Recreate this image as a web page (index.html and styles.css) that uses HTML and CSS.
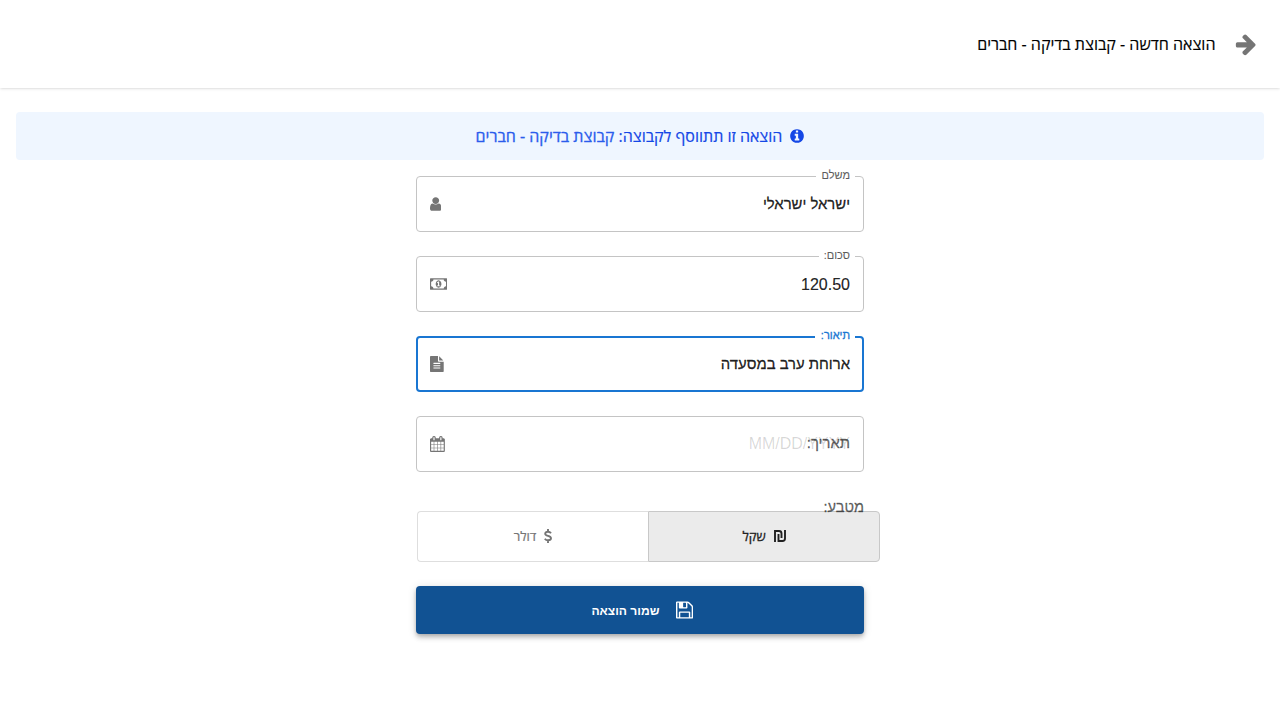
FILE: index.html
```html
<!DOCTYPE html>
<html lang="he" dir="rtl">
<head>
<meta charset="utf-8">
<title>הוצאה חדשה</title>
<link rel="stylesheet" href="styles.css">
</head>
<body>
<header class="topbar">
  <svg class="back" viewBox="64 0 1536 1792"><path d="M1600 960q0 54-37 91l-651 651q-39 37-91 37-51 0-90-37l-75-75q-38-38-38-91t38-91l293-293h-704q-52 0-84.500-37.500t-32.500-90.500v-128q0-53 32.500-90.500t84.500-37.500h704l-293-294q-38-36-38-90t38-90l75-75q38-38 90-38 53 0 91 38l651 651q37 35 37 90z"/></svg>
  <h1 class="title">הוצאה חדשה - קבוצת בדיקה - חברים</h1>
</header>
<div class="notice">
  <svg class="info" viewBox="128 0 1536 1792"><path d="M1152 1376v-160q0-14-9-23t-23-9h-96v-512q0-14-9-23t-23-9h-320q-14 0-23 9t-9 23v160q0 14 9 23t23 9h96v320h-96q-14 0-23 9t-9 23v160q0 14 9 23t23 9h448q14 0 23-9t9-23zm-128-896v-160q0-14-9-23t-23-9h-192q-14 0-23 9t-9 23v160q0 14 9 23t23 9h192q14 0 23-9t9-23zm640 416q0 209-103 385.500t-279.500 279.500-385.500 103-385.500-103-279.500-279.500-103-385.500 103-385.500 279.500-279.500 385.500-103 385.500 103 279.500 279.500 103 385.500z"/></svg>
  <p class="notice-text">הוצאה זו תתווסף לקבוצה: <span class="group">קבוצת בדיקה - חברים</span></p>
</div>
<main class="form">
  <fieldset class="field">
    <legend class="label">משלם</legend>
    <span class="value">ישראל ישראלי</span>
    <svg class="icon user" viewBox="256 0 1280 1792"><path d="M1536 1399q0 109-62.500 187t-150.500 78h-854q-88 0-150.500-78t-62.500-187q0-85 8.500-160.500t31.500-152 58.500-131 94-89 134.500-34.500q131 128 313 128t313-128q76 0 134.500 34.500t94 89 58.500 131 31.500 152 8.500 160.500zm-256-887q0 159-112.500 271.500t-271.500 112.500-271.500-112.500-112.500-271.500 112.500-271.500 271.500-112.500 271.500 112.500 112.500 271.500z"/></svg>
  </fieldset>
  <fieldset class="field">
    <legend class="label">סכום:</legend>
    <span class="value number">120.50</span>
    <svg class="icon money" viewBox="0 0 1920 1792"><path d="M768 1152h384v-96h-128v-448h-114l-148 137 77 80q42-37 55-57h2v288h-128v96zm512-256q0 70-21 142t-59.500 134-101.500 101-138 39-138-39-101.500-101-59.500-134-21-142 21-142 59.500-134 101.500-101 138-39 138 39 101.500 101 59.500 134 21 142zm512 256v-512q-106 0-181-75t-75-181h-1152q0 106-75 181t-181 75v512q106 0 181 75t75 181h1152q0-106 75-181t181-75zm128-832v1152q0 26-19 45t-45 19h-1792q-26 0-45-19t-19-45v-1152q0-26 19-45t45-19h1792q26 0 45 19t19 45z"/></svg>
  </fieldset>
  <fieldset class="field focused">
    <legend class="label">תיאור:</legend>
    <span class="value">ארוחת ערב במסעדה</span>
    <svg class="icon file" viewBox="128 0 1536 1792"><path d="M1596 476q14 14 28 36h-472v-472q22 14 36 28zm-476 164h544v1056q0 40-28 68t-68 28h-1344q-40 0-68-28t-28-68v-1600q0-40 28-68t68-28h800v544q0 40 28 68t68 28zm160 736v-64q0-14-9-23t-23-9h-704q-14 0-23 9t-9 23v64q0 14 9 23t23 9h704q14 0 23-9t9-23zm0-256v-64q0-14-9-23t-23-9h-704q-14 0-23 9t-9 23v64q0 14 9 23t23 9h704q14 0 23-9t9-23zm0-256v-64q0-14-9-23t-23-9h-704q-14 0-23 9t-9 23v64q0 14 9 23t23 9h704q14 0 23-9t9-23z"/></svg>
  </fieldset>
  <div class="field date">
    <span class="stack"><span class="placeholder">MM/DD/YYYY</span><span class="inner-label">תאריך:</span></span>
    <svg class="icon calendar" viewBox="64 0 1664 1792"><path d="M192 1664h288v-288h-288v288zm352 0h320v-288h-320v288zm-352-352h288v-320h-288v320zm352 0h320v-320h-320v320zm-352-384h288v-288h-288v288zm736 736h320v-288h-320v288zm-384-736h320v-288h-320v288zm768 736h288v-288h-288v288zm-384-352h320v-320h-320v320zm-352-864v-288q0-13-9.500-22.500t-22.500-9.500h-64q-13 0-22.500 9.500t-9.500 22.500v288q0 13 9.500 22.500t22.500 9.500h64q13 0 22.500-9.500t9.500-22.500zm736 864h288v-320h-288v320zm-384-384h320v-288h-320v288zm384 0h288v-288h-288v288zm32-480v-288q0-13-9.500-22.500t-22.500-9.500h-64q-13 0-22.500 9.500t-9.500 22.500v288q0 13 9.500 22.500t22.500 9.500h64q13 0 22.500-9.500t9.500-22.500zm384-64v1280q0 52-38 90t-90 38h-1408q-52 0-90-38t-38-90v-1280q0-52 38-90t90-38h128v-96q0-66 47-113t113-47h64q66 0 113 47t47 113v96h384v-96q0-66 47-113t113-47h64q66 0 113 47t47 113v96h128q52 0 90 38t38 90z"/></svg>
  </div>
  <div class="currency-label">מטבע:</div>
  <div class="toggle">
    <button class="option selected">
      <svg class="ils" viewBox="0 0 12 12"><path d="M1 12V1h4q2.500 0 2.500 2.500V8M4.500 4v7h4q2.500 0 2.500-2.500V0"/></svg>
      שקל
    </button>
    <button class="option">
      <svg class="usd" viewBox="0 0 8 14"><path d="M7 4.200Q6 2.700 4 2.700 1.200 2.700 1.200 4.700C1.200 7.500 7 6.300 7 9.300Q7 11.300 4 11.300 2 11.300.8 9.700M4 0v2.700M4 11.300V14"/></svg>
      דולר
    </button>
  </div>
  <button class="save">
    <svg class="floppy" viewBox="128 0 1536 1792"><path d="M512 1536h768v-384h-768v384zm896 0h128v-896q0-14-10-38.500t-20-34.500l-281-281q-10-10-34-20t-39-10v416q0 40-28 68t-68 28h-576q-40 0-68-28t-28-68v-416h-128v1280h128v-416q0-40 28-68t68-28h832q40 0 68 28t28 68v416zm-384-928v-320q0-13-9.500-22.500t-22.500-9.500h-192q-13 0-22.500 9.500t-9.500 22.500v320q0 13 9.500 22.500t22.500 9.500h192q13 0 22.500-9.500t9.500-22.500zm640 32v928q0 40-28 68t-68 28h-1344q-40 0-68-28t-28-68v-1344q0-40 28-68t68-28h928q40 0 88 20t76 48l280 280q28 28 48 76t20 88z"/></svg>
    <span>שמור הוצאה</span>
  </button>
</main>
</body>
</html>
```
FILE: styles.css
```css
* { box-sizing: border-box; }
body { margin: 0; min-height: 100vh; background: #fff; font-family: "Liberation Sans", Arial, sans-serif; font-size: 16px; color: rgba(0,0,0,.87); }
svg { fill: currentColor; flex: none; }
.topbar { display: flex; align-items: center; gap: 20px; height: 88px; padding: 0 24px; background: #fff; box-shadow: 0 1px 3px rgba(0,0,0,.1), 0 1px 2px -1px rgba(0,0,0,.1); color: #000; }
.back { width: 20.570px; height: 24px; color: #757575; }
.title { margin: 0; font: 400 16px/24px "Open Sans", sans-serif; -webkit-text-stroke: .15px; }
.notice { display: flex; align-items: center; justify-content: center; gap: 8px; height: 48px; margin: 24px 16px 16px; border-radius: 4px; background: #eff6ff; color: #1447e6; }
.info { width: 14px; height: 16px; }
.notice-text { margin: 0; font: 400 16px/24px "Open Sans", sans-serif; -webkit-text-stroke: .2px; }
.group { color: #2b5cec; -webkit-text-stroke: .3px; }
.form { width: 448px; margin: 0 auto; }
.field { display: flex; align-items: center; justify-content: space-between; min-width: 0; height: 61px; margin: -5px 0 24px; padding: 0 13px 5px; border: 1px solid #c4c4c4; border-radius: 4px; }
.label { height: 11px; padding: 0 5px; margin-right: -5px; font-size: 11px; line-height: 9px; color: rgba(0,0,0,.6); -webkit-text-stroke: .2px; }
.value { font-size: 14.860px; line-height: 23px; -webkit-text-stroke: .3px; }
.number { font-size: 16px; -webkit-text-stroke: .2px; }
.icon { height: 16px; color: #757575; }
.user { width: 11.430px; }
.money { width: 17.140px; }
.file { width: 13.710px; }
.calendar { width: 14.860px; }
.focused { border: 2px solid #1976d2; padding: 0 12px 4px; }
.focused .label { padding-left: 6px; color: #1976d2; -webkit-text-stroke: .3px; }
.date { height: 56px; margin: 0; padding: 0 13px; }
.stack { display: grid; justify-items: start; line-height: 23px; padding-bottom: 2px; }
.placeholder, .inner-label { grid-area: 1 / 1; }
.placeholder { color: rgba(0,0,0,.16); }
.inner-label { font-size: 14.860px; color: rgba(0,0,0,.6); -webkit-text-stroke: .3px; }
.currency-label { position: relative; z-index: 1; height: 23px; margin: 24px 0 -8px; font-size: 14.600px; line-height: 23px; color: rgba(0,0,0,.6); -webkit-text-stroke: .3px; }
.toggle { display: flex; width: 463px; margin: 0 -16px 24px 0; height: 51px; }
.option { display: flex; flex: 1; align-items: center; justify-content: center; gap: 8px; border: 1px solid #dedede; border-right: 0; border-radius: 4px 0 0 4px; background: none; color: #757575; font: 500 13px/23px "Open Sans", sans-serif; -webkit-text-stroke: .2px; }
.selected { flex: 0 0 232px; border: 1px solid #c8c8c8; border-radius: 0 4px 4px 0; background: #ebebeb; color: #212121; -webkit-text-stroke: .3px; }
.ils, .usd { fill: none; stroke: currentColor; stroke-width: 1.900; }
.ils { width: 12px; height: 12px; margin-bottom: 2px; }
.usd { width: 8px; height: 14px; margin-bottom: 1px; }
.save { display: flex; align-items: center; justify-content: center; gap: 16px; width: 448px; height: 48px; padding: 0 0 0 4px; border: 0; border-radius: 4px; background: #115293; color: #fff; font: 700 12.100px/22px "Liberation Sans", Arial, sans-serif; box-shadow: 0 2px 4px -1px rgba(0,0,0,.2), 0 4px 5px rgba(0,0,0,.14), 0 1px 10px rgba(0,0,0,.12); }
.save span { padding-top: 1px; }
.floppy { width: 17.140px; height: 20px; }
```
